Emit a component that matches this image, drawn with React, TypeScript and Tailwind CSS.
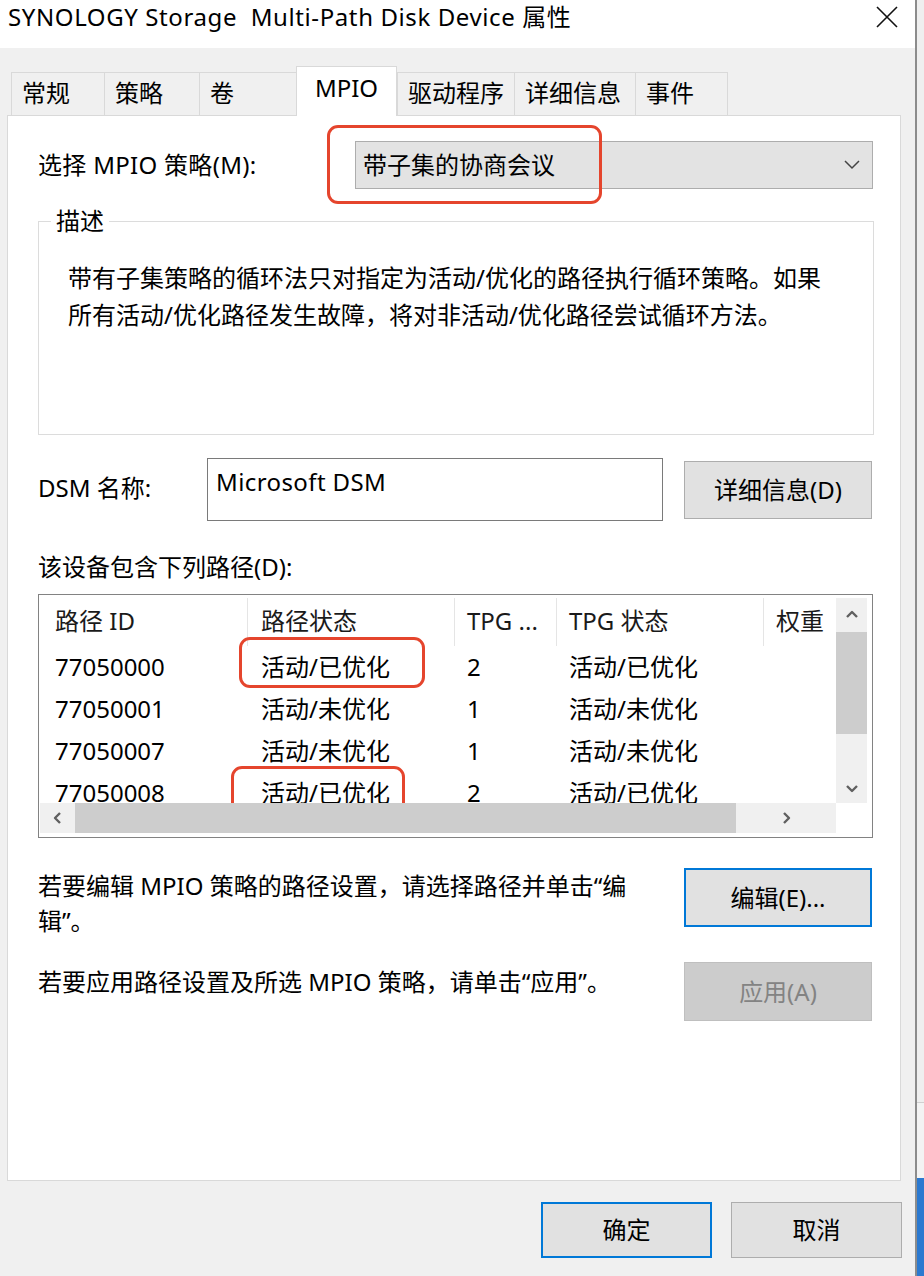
import React from 'react';

const FONT = { fontFamily: '"Noto Sans", "Noto Sans CJK SC", sans-serif' };

const rows = [
  { id: '77050000', state: '活动/已优化', tpg: '2', tpgState: '活动/已优化' },
  { id: '77050001', state: '活动/未优化', tpg: '1', tpgState: '活动/未优化' },
  { id: '77050007', state: '活动/未优化', tpg: '1', tpgState: '活动/未优化' },
  { id: '77050008', state: '活动/已优化', tpg: '2', tpgState: '活动/已优化' },
];

const tabs = ['常规', '策略', '卷', 'MPIO', '驱动程序', '详细信息', '事件'];
const tabWidths = ['w-[94px]', 'w-[95px]', 'w-[96px]', 'w-[101px]', 'w-[118px]', 'w-[121px]', 'w-[92px]'];

function Chevron({ dir, className }: { dir: 'up' | 'down' | 'left' | 'right'; className?: string }) {
  const d = {
    up: 'M2 9 L7 4 L12 9',
    down: 'M2 5 L7 10 L12 5',
    left: 'M9 2 L4 7 L9 12',
    right: 'M5 2 L10 7 L5 12',
  }[dir];
  return (
    <svg viewBox="0 0 14 14" className={className ?? 'w-[14px] h-[14px]'} fill="none">
      <path d={d} stroke="#606060" strokeWidth="2.4" strokeLinejoin="round" />
    </svg>
  );
}

function WinButton({ label, focused, disabled, className }: { label: string; focused?: boolean; disabled?: boolean; className: string }) {
  const tone = disabled
    ? 'bg-[#cccccc] border border-[#bfbfbf] text-[#838383]'
    : focused
    ? 'bg-[#e1e1e1] border-2 border-[#0078d7] text-black'
    : 'bg-[#e1e1e1] border border-[#adadad] text-black';
  return (
    <button type="button" className={`flex items-center justify-center text-[24px] leading-none ${tone} ${className}`}>
      {label}
    </button>
  );
}

export default function App() {
  return (
    <div className="w-[924px] h-[1276px] flex bg-[#f0f0f0] overflow-hidden text-black" style={FONT}>
      <div className="w-[917px] h-full flex flex-col border-r-2 border-[#8c8c8c]">
        {/* title bar */}
        <div className="h-[48px] bg-white flex items-start justify-between pl-[8px] pr-[17px] pt-[1px]">
          <span className="text-[24px] leading-[32px] whitespace-pre tracking-[0.6px]">SYNOLOGY Storage  Multi-Path Disk Device 属性</span>
          <svg viewBox="0 0 22 22" className="w-[22px] h-[22px] mt-[5px]" fill="none">
            <path d="M1 1 L21 21 M21 1 L1 21" stroke="#111" strokeWidth="1.6" />
          </svg>
        </div>

        <div className="flex-1 flex flex-col pl-[7px] pr-[13px]">
          {/* tabs */}
          <div className="flex items-end h-[67px] pl-[4px] relative z-10">
            {tabs.map((t, i) =>
              t === 'MPIO' ? (
                <div
                  key={t}
                  className={`${tabWidths[i]} h-[50px] -mb-[1px] bg-white border border-b-0 border-[#d9d9d9] flex items-start justify-center pt-[5px] text-[24px] leading-[32px]`}
                >
                  {t}
                </div>
              ) : (
                <div
                  key={t}
                  className={`${tabWidths[i]} h-[43px] bg-[#f0f0f0] border border-b-0 border-[#d9d9d9] ${i > 0 && i !== 4 ? 'border-l-0' : ''} ${i === 2 ? 'border-r-0' : ''} flex items-start pl-[10px] pt-[4px] text-[24px] leading-[32px]`}
                >
                  {t}
                </div>
              )
            )}
          </div>

          {/* tab panel */}
          <div className="w-[894px] h-[1066px] bg-white border border-[#d9d9d9] pl-[30px] pr-[26px] flex flex-col">
            {/* policy row */}
            <div className="flex items-center mt-[25px] relative">
              <span className="text-[24px] leading-[32px] w-[317px] tracking-[0.3px]">选择 MPIO 策略(M):</span>
              <div className="w-[518px] h-[48px] bg-[#e3e3e3] border border-[#adadad] flex items-center justify-between pl-[7px] pr-[12px]">
                <span className="text-[24px] leading-[32px]">带子集的协商会议</span>
                <svg viewBox="0 0 16 10" className="w-[16px] h-[10px]" fill="none">
                  <path d="M1 1 L8 8 L15 1" stroke="#444" strokeWidth="1.5" />
                </svg>
              </div>
              <div className="absolute left-[289px] top-[-16px] w-[275px] h-[79px] border-[3px] border-[#e5452d] rounded-[11px]" />
            </div>

            {/* description group */}
            <fieldset className="mt-[17px] h-[229px] border border-[#dcdcdc]">
              <legend className="ml-[12px] px-[5px] text-[24px] leading-[30px]">描述</legend>
              <p className="pt-[23px] pl-[29px] pr-[44px] text-[24px] leading-[37px]">
                带有子集策略的循环法只对指定为活动/优化的路径执行循环策略。如果所有活动/优化路径发生故障，将对非活动/优化路径尝试循环方法。
              </p>
            </fieldset>

            {/* DSM row */}
            <div className="flex items-start mt-[23px]">
              <span className="w-[169px] pt-[14px] text-[24px] leading-[32px]">DSM 名称:</span>
              <div className="w-[456px] h-[63px] border border-[#7a7a7a] pl-[8px] pt-[7px] text-[24px] leading-[32px] tracking-[0.4px]">
                Microsoft DSM
              </div>
              <WinButton label="详细信息(D)" className="ml-[21px] mt-[3px] w-[188px] h-[58px]" />
            </div>

            <div className="mt-[30px] text-[24px] leading-[32px]">该设备包含下列路径(D):</div>

            {/* list view */}
            <div className="mt-[11px] w-[835px] h-[244px] border border-[#828282] pt-[3px] pl-[1px] pr-[5px] pb-[4px] flex flex-col">
              <div className="flex h-[205px]">
                <div className="flex-1 overflow-hidden relative">
                  <div className="flex h-[48px] text-[24px] leading-[32px] text-[#1a1a1a]">
                    <div className="w-[208px] shrink-0 pl-[15px] pt-[7px] border-r border-[#e5e5e5]">路径 ID</div>
                    <div className="w-[207px] shrink-0 pl-[13px] pt-[7px] border-r border-[#e5e5e5]">路径状态</div>
                    <div className="w-[102px] shrink-0 pl-[12px] pt-[7px] border-r border-[#e5e5e5] whitespace-nowrap">TPG ...</div>
                    <div className="w-[207px] shrink-0 pl-[12px] pt-[7px] border-r border-[#e5e5e5]">TPG 状态</div>
                    <div className="w-[120px] shrink-0 pl-[12px] pt-[7px]">权重</div>
                  </div>
                  {rows.map((r) => (
                    <div key={r.id} className="flex h-[42px] items-center text-[24px] leading-[32px]">
                      <div className="w-[208px] shrink-0 pl-[15px]">{r.id}</div>
                      <div className="w-[207px] shrink-0 pl-[13px]">{r.state}</div>
                      <div className="w-[102px] shrink-0 pl-[12px]">{r.tpg}</div>
                      <div className="w-[207px] shrink-0 pl-[12px]">{r.tpgState}</div>
                    </div>
                  ))}
                  <div className="absolute left-[199px] top-[39px] w-[186px] h-[51px] border-[3px] border-[#e5452d] rounded-[11px]" />
                  <div className="absolute left-[191px] top-[168px] w-[174px] h-[50px] border-[3px] border-[#e5452d] rounded-[11px]" />
                </div>
                <div className="w-[31px] shrink-0 bg-[#f0f0f0] flex flex-col items-center">
                  <div className="h-[34px] flex items-center justify-center">
                    <Chevron dir="up" />
                  </div>
                  <div className="w-full h-[102px] bg-[#cdcdcd]" />
                  <div className="flex-1 flex items-end justify-center pb-[8px]">
                    <Chevron dir="down" />
                  </div>
                </div>
              </div>
              <div className="flex h-[30px]">
                <div className="flex-1 bg-[#f0f0f0] flex items-center">
                  <div className="w-[35px] flex justify-center">
                    <Chevron dir="left" />
                  </div>
                  <div className="w-[661px] h-full bg-[#cdcdcd]" />
                  <div className="flex-1 flex justify-center">
                    <Chevron dir="right" />
                  </div>
                </div>
                <div className="w-[31px] shrink-0 bg-white" />
              </div>
            </div>

            {/* edit row */}
            <div className="flex items-start h-[59px] mt-[30px]">
              <p className="w-[620px] text-[24px] leading-[35px]">
                若要编辑 MPIO 策略的路径设置，请选择路径并单击“编辑”。
              </p>
              <WinButton label="编辑(E)..." focused className="ml-[26px] w-[188px] h-[59px] shrink-0" />
            </div>

            {/* apply row */}
            <div className="flex items-start mt-[35px]">
              <p className="w-[620px] pt-[2px] text-[24px] leading-[35px]">
                若要应用路径设置及所选 MPIO 策略，请单击“应用”。
              </p>
              <WinButton label="应用(A)" disabled className="ml-[26px] w-[188px] h-[59px] shrink-0" />
            </div>
          </div>

          {/* bottom buttons */}
          <div className="flex justify-end gap-[19px] mt-[21px]">
            <WinButton label="确定" focused className="w-[171px] h-[56px]" />
            <WinButton label="取消" className="w-[171px] h-[56px]" />
          </div>
        </div>
      </div>

      {/* strip of the window behind */}
      <div className="flex-1 flex flex-col">
        <div className="h-[1103px] bg-[#efefef] border-b border-[#d0d0d0]" />
        <div className="h-[75px] bg-[#f3f3f3]" />
        <div className="flex-1 bg-[#2b79d0]" />
      </div>
    </div>
  );
}
